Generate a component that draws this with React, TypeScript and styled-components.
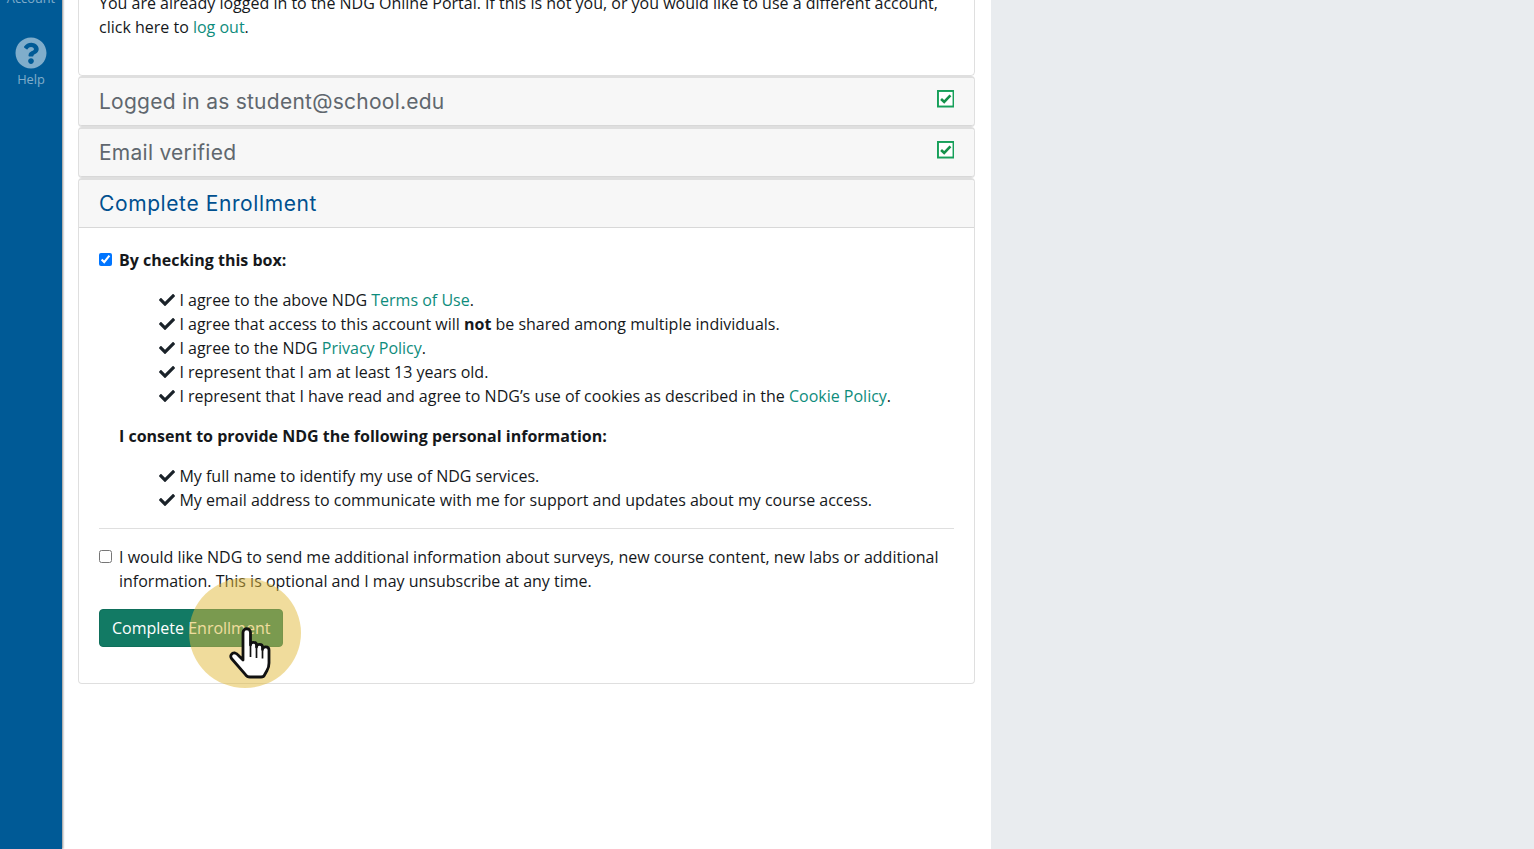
import { createGlobalStyle, styled } from "styled-components";
import { FaCheck, FaQuestionCircle } from "react-icons/fa";

const GlobalStyle = createGlobalStyle`
  html, body {
    margin: 0;
    height: 100%;
    overflow: hidden;
  }
  body {
    font-family: "Open Sans", "Liberation Sans", sans-serif;
    font-size: 16px;
    line-height: 24px;
    color: #15181b;
    background: #fff;
  }
`;

const CheckedBox = () => (
  <BoxIcon viewBox="0 0 18 18" aria-hidden="true">
    <rect x="1" y="1" width="16" height="16" fill="#fff" stroke="#17a05a" strokeWidth="2" />
    <path d="M4.2 9.2 7.4 12.2 13.8 5.6" fill="none" stroke="#14914a" strokeWidth="2.7" />
  </BoxIcon>
);

const HandCursor = () => (
  <Hand viewBox="0 0 46 54" aria-hidden="true">
    <path
      d="M15 34V6.500c0-5 7.500-5 7.500 0V19c0-3.500 6-3.500 6 0v2c0-3.500 6-3.500 6 0v2.500c0-3.500 6.500-3.500 6.500 .5v13c0 3-.5 5-2 7.500l-2.500 4.500c-.5 1.500-2 2-3.500 2H22c-2 0-3.500-.8-4.500-2.300L3.500 32.500c-2-3 .5-6 3.500-5.500 1.500.3 2.500 1.200 3.500 2.500Z"
      fill="#fff"
      stroke="#111"
      strokeWidth="2.800"
      strokeLinejoin="round"
    />
    <path d="M22.500 19v12M28.500 21v11M34.500 23.500v9" fill="none" stroke="#111" strokeWidth="1.700" />
  </Hand>
);

export default function App() {
  return (
    <>
      <GlobalStyle />
      <Page>
        <Sidebar>
          <NavLabel>Account</NavLabel>
          <HelpLink>
            <FaQuestionCircle size={32} />
            <NavLabel>Help</NavLabel>
          </HelpLink>
        </Sidebar>
        <Main>
          <Panel>
            <PanelBody>
              <Paragraph>
                You are already logged in to the NDG Online Portal. If this is not you, or you would like to use a
                different account, click here to <TextLink>log out</TextLink>.
              </Paragraph>
            </PanelBody>
          </Panel>
          <Panel>
            <PanelHeader>
              <PanelTitle>Logged in as student@school.edu</PanelTitle>
              <CheckedBox />
            </PanelHeader>
          </Panel>
          <Panel>
            <PanelHeader>
              <PanelTitle>Email verified</PanelTitle>
              <CheckedBox />
            </PanelHeader>
          </Panel>
          <Panel>
            <PanelHeader>
              <PanelTitle $active>Complete Enrollment</PanelTitle>
            </PanelHeader>
            <PanelBody>
              <CheckRow>
                <input type="checkbox" defaultChecked />
                <strong>By checking this box:</strong>
              </CheckRow>
              <AgreeList>
                <AgreeItem>
                  <FaCheck size={16} />I agree to the above NDG <TextLink>Terms of Use</TextLink>.
                </AgreeItem>
                <AgreeItem>
                  <FaCheck size={16} />I agree that access to this account will <strong>not</strong> be shared among
                  multiple individuals.
                </AgreeItem>
                <AgreeItem>
                  <FaCheck size={16} />I agree to the NDG <TextLink>Privacy Policy</TextLink>.
                </AgreeItem>
                <AgreeItem>
                  <FaCheck size={16} />I represent that I am at least 13 years old.
                </AgreeItem>
                <AgreeItem>
                  <FaCheck size={16} />I represent that I have read and agree to NDG’s use of cookies as described in
                  the <TextLink>Cookie Policy</TextLink>.
                </AgreeItem>
              </AgreeList>
              <ConsentTitle>I consent to provide NDG the following personal information:</ConsentTitle>
              <AgreeList>
                <AgreeItem>
                  <FaCheck size={16} />My full name to identify my use of NDG services.
                </AgreeItem>
                <AgreeItem>
                  <FaCheck size={16} />My email address to communicate with me for support and updates about my course
                  access.
                </AgreeItem>
              </AgreeList>
              <Divider />
              <CheckRow>
                <input type="checkbox" />
                <span>
                  I would like NDG to send me additional information about surveys, new course content, new labs or
                  additional information. This is optional and I may unsubscribe at any time.
                </span>
              </CheckRow>
              <ButtonWrap>
                <SubmitButton type="button">Complete Enrollment</SubmitButton>
                <Highlight />
                <HandCursor />
              </ButtonWrap>
            </PanelBody>
          </Panel>
        </Main>
        <Gutter />
      </Page>
    </>
  );
}

const Page = styled.div`
  display: flex;
  height: 100vh;
  overflow: hidden;
`;

const Sidebar = styled.nav`
  position: relative;
  z-index: 1;
  flex: 0 0 62px;
  display: flex;
  flex-direction: column;
  align-items: center;
  margin-top: -11px;
  background: #005a96;
  box-shadow: 1px 0 2px rgba(0, 0, 0, 0.45);
  color: rgba(255, 255, 255, 0.5);
`;

const NavLabel = styled.span`
  font-size: 12.8px;
  line-height: 18px;
`;

const HelpLink = styled.a`
  display: flex;
  flex-direction: column;
  align-items: center;
  margin-top: 30px;
  gap: 1px;
`;

const Main = styled.main`
  flex: 0 0 929px;
  box-sizing: border-box;
  margin-top: -30px;
  padding: 0 16px 0 16px;
  background: #fff;
`;

const Gutter = styled.aside`
  flex: 1;
  background: #e9ecef;
`;

const Panel = styled.section`
  border: 1px solid rgba(0, 0, 0, 0.125);
  border-radius: 4px;
  margin-bottom: -1px;
  &:not(:first-child) {
    border-top-width: 2px;
    margin-top: 1px;
  }
`;

const PanelHeader = styled.header`
  display: flex;
  justify-content: space-between;
  align-items: flex-start;
  height: 48px;
  box-sizing: border-box;
  padding: 0 20px;
  background: #f7f7f7;
  border-bottom: 1px solid rgba(0, 0, 0, 0.125);
  border-radius: 3px 3px 0 0;
  &:only-child {
    border-radius: 3px;
  }
`;

const PanelTitle = styled.h5<{ $active?: boolean }>`
  margin: 0;
  font-family: Inter, "DejaVu Sans", sans-serif;
  font-size: 21px;
  font-weight: 400;
  line-height: 47px;
  letter-spacing: ${(p) => (p.$active ? "0.6px" : "0.25px")};
  color: ${(p) => (p.$active ? "#00508f" : "#60676e")};
`;

const BoxIcon = styled.svg`
  width: 17.5px;
  height: 17.5px;
  margin-top: 12px;
`;

const PanelBody = styled.div`
  padding: 20px;
`;

const Paragraph = styled.p`
  margin: 0 0 16px;
`;

const TextLink = styled.a`
  color: #0e8c7c;
  cursor: pointer;
`;

const CheckRow = styled.label`
  display: flex;
  align-items: flex-start;
  gap: 7px;
  margin-bottom: 16px;
  input {
    flex: none;
    width: 13px;
    height: 13px;
    margin: 5px 0 0;
  }
  strong {
    font-weight: 700;
  }
`;

const AgreeList = styled.ul`
  list-style: none;
  margin: 0 0 16px;
  padding: 0 0 0 60px;
`;

const AgreeItem = styled.li`
  svg {
    margin-right: 4.4px;
    vertical-align: -2px;
    color: #1a2229;
  }
`;

const ConsentTitle = styled.p`
  margin: 0 0 16px 20px;
  font-weight: 700;
`;

const Divider = styled.hr`
  margin: 0 0 16px;
  border: 0;
  border-top: 1px solid rgba(0, 0, 0, 0.125);
`;

const ButtonWrap = styled.div`
  position: relative;
  height: 38px;
  margin-bottom: 16px;
`;

const SubmitButton = styled.button`
  height: 38px;
  padding: 0 12px;
  border: 1px solid #0f6f5b;
  border-radius: 4px;
  background: #127a64;
  color: #fff;
  font: inherit;
`;

const Highlight = styled.div`
  position: absolute;
  left: 90px;
  top: -31px;
  width: 112px;
  height: 110px;
  border-radius: 50%;
  background: rgba(226, 186, 58, 0.5);
  pointer-events: none;
`;

const Hand = styled.svg`
  position: absolute;
  left: 129px;
  top: 17px;
  width: 46px;
  height: 54px;
`;
